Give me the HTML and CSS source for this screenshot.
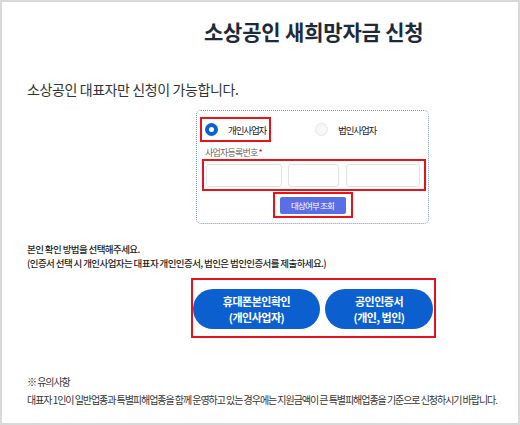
FILE: index.html
```html
<!DOCTYPE html>
<html>
	<head>
		<meta charset="UTF-8"/>
		<title>소상공인 새희망자금 신청</title>
		<link rel="stylesheet" href="styles.css">
	</head>
	<body>
		<div class="page">
			<h1 class="title">소상공인 새희망자금 신청</h1>
			<p class="intro">소상공인 대표자만 신청이 가능합니다.</p>

			<div class="lookup">
				<div class="types">
					<label class="type mark"><span class="radio on"></span>개인사업자</label>
					<label class="type other"><span class="radio"></span>법인사업자</label>
				</div>
				<div class="field-label">사업자등록번호 <span class="req">*</span></div>
				<div class="bizno mark">
					<input class="num n1" type="text">
					<input class="num n2" type="text">
					<input class="num n3" type="text">
				</div>
				<div class="check mark">
					<button class="check-btn">대상여부 조회</button>
				</div>
			</div>

			<p class="guide">본인 확인 방법을 선택해주세요.<br>(인증서 선택 시 개인사업자는 대표자 개인인증서, 법인은 법인인증서를 제출하세요.)</p>

			<div class="auth mark">
				<button class="auth-btn phone">휴대폰본인확인<br>(개인사업자)</button>
				<button class="auth-btn cert">공인인증서<br>(개인, 법인)</button>
			</div>

			<div class="notice">
				<p>※ 유의사항</p>
				<p>대표자 1인이 일반업종과 특별피해업종을 함께 운영하고 있는 경우에는 지원금액이 큰 특별피해업종을 기준으로 신청하시기 바랍니다.</p>
			</div>
		</div>
	</body>
</html>
```

FILE: styles.css
```css
body{
	margin: 0;
	font-family: "Noto Sans CJK KR", "Noto Sans", sans-serif;
	background: #fff;
}
p{
	margin: 0;
}
.page{
	width: 520px;
	height: 425px;
	box-sizing: border-box;
	border: 2px solid #d9d9d9;
	padding: 0 25px;
	overflow: hidden;
}
.title{
	margin: 14px 0 0 177px;
	font-size: 21px;
	line-height: 30px;
	font-weight: 700;
	letter-spacing: -0.2px;
	color: #1d2a3b;
}
.intro{
	margin-top: 33px;
	font-size: 14px;
	line-height: 20px;
	letter-spacing: -0.4px;
	color: #333;
}

/* 사업자 조회 박스 */
.lookup{
	margin: 11px 0 0 169px;
	width: 233px;
	height: 114px;
	box-sizing: border-box;
	border: 1px dotted #7d98c2;
	border-radius: 5px;
}
.mark{
	border: 2px solid #e3141b;
	box-sizing: border-box;
}
.types{
	display: flex;
	margin-top: 6px;
}
.type{
	display: flex;
	align-items: center;
	gap: 10px;
	height: 25px;
	font-size: 9.5px;
	letter-spacing: -1.1px;
	color: #222;
}
.type.mark{
	width: 71px;
	margin-left: 3px;
	padding-left: 3px;
}
.type.other{
	margin-left: 44px;
}
.radio{
	width: 13px;
	height: 13px;
	box-sizing: border-box;
	border-radius: 50%;
	border: 1px solid #e6e6e6;
	background: #f7f7f7;
}
.radio.on{
	border: 4px solid #0b63d3;
	background: #fff;
}
.field-label{
	margin: 5px 0 0 8px;
	font-size: 9px;
	line-height: 12px;
	letter-spacing: -0.8px;
	color: #666;
}
.req{
	color: #e3141b;
}
.bizno{
	display: flex;
	align-items: center;
	gap: 6px;
	margin-left: 5px;
	width: 224px;
	height: 32px;
	padding: 0 2px;
}
.num{
	height: 23px;
	margin: 0;
	padding: 0;
	box-sizing: border-box;
	border: 1px solid #e2e2e2;
	border-radius: 3px;
	background: #fff;
}
.n1{ width: 76px; }
.n2{ width: 51px; }
.n3{ width: 74px; margin-left: 1px; }
.check{
	display: flex;
	justify-content: center;
	align-items: center;
	width: 80px;
	height: 26px;
	margin: 1px auto 0;
}
.check-btn{
	width: 66px;
	height: 17px;
	padding: 0;
	border: 0;
	border-radius: 2px;
	background: #5a6fe6;
	color: #fff;
	font-family: inherit;
	font-size: 8.5px;
	letter-spacing: -0.8px;
}

/* 본인 확인 */
.guide{
	margin-top: 18px;
	font-size: 9.5px;
	line-height: 14px;
	font-weight: 500;
	letter-spacing: -0.6px;
	color: #222;
}
.auth{
	display: flex;
	align-items: flex-start;
	gap: 5px;
	margin: 8px 0 0 164px;
	width: 245px;
	height: 60px;
	padding-top: 9px;
}
.auth-btn{
	height: 40px;
	padding: 0;
	border: 0;
	border-radius: 20px;
	background: #0c5fcf;
	color: #fff;
	font-family: inherit;
	font-size: 11px;
	line-height: 16px;
	font-weight: 700;
	letter-spacing: -0.5px;
}
.phone{ width: 127px; }
.cert{ width: 108px; }

.notice{
	margin-top: 35px;
	font-size: 10px;
	line-height: 18px;
	letter-spacing: -1.05px;
	white-space: nowrap;
	color: #333;
}
```
